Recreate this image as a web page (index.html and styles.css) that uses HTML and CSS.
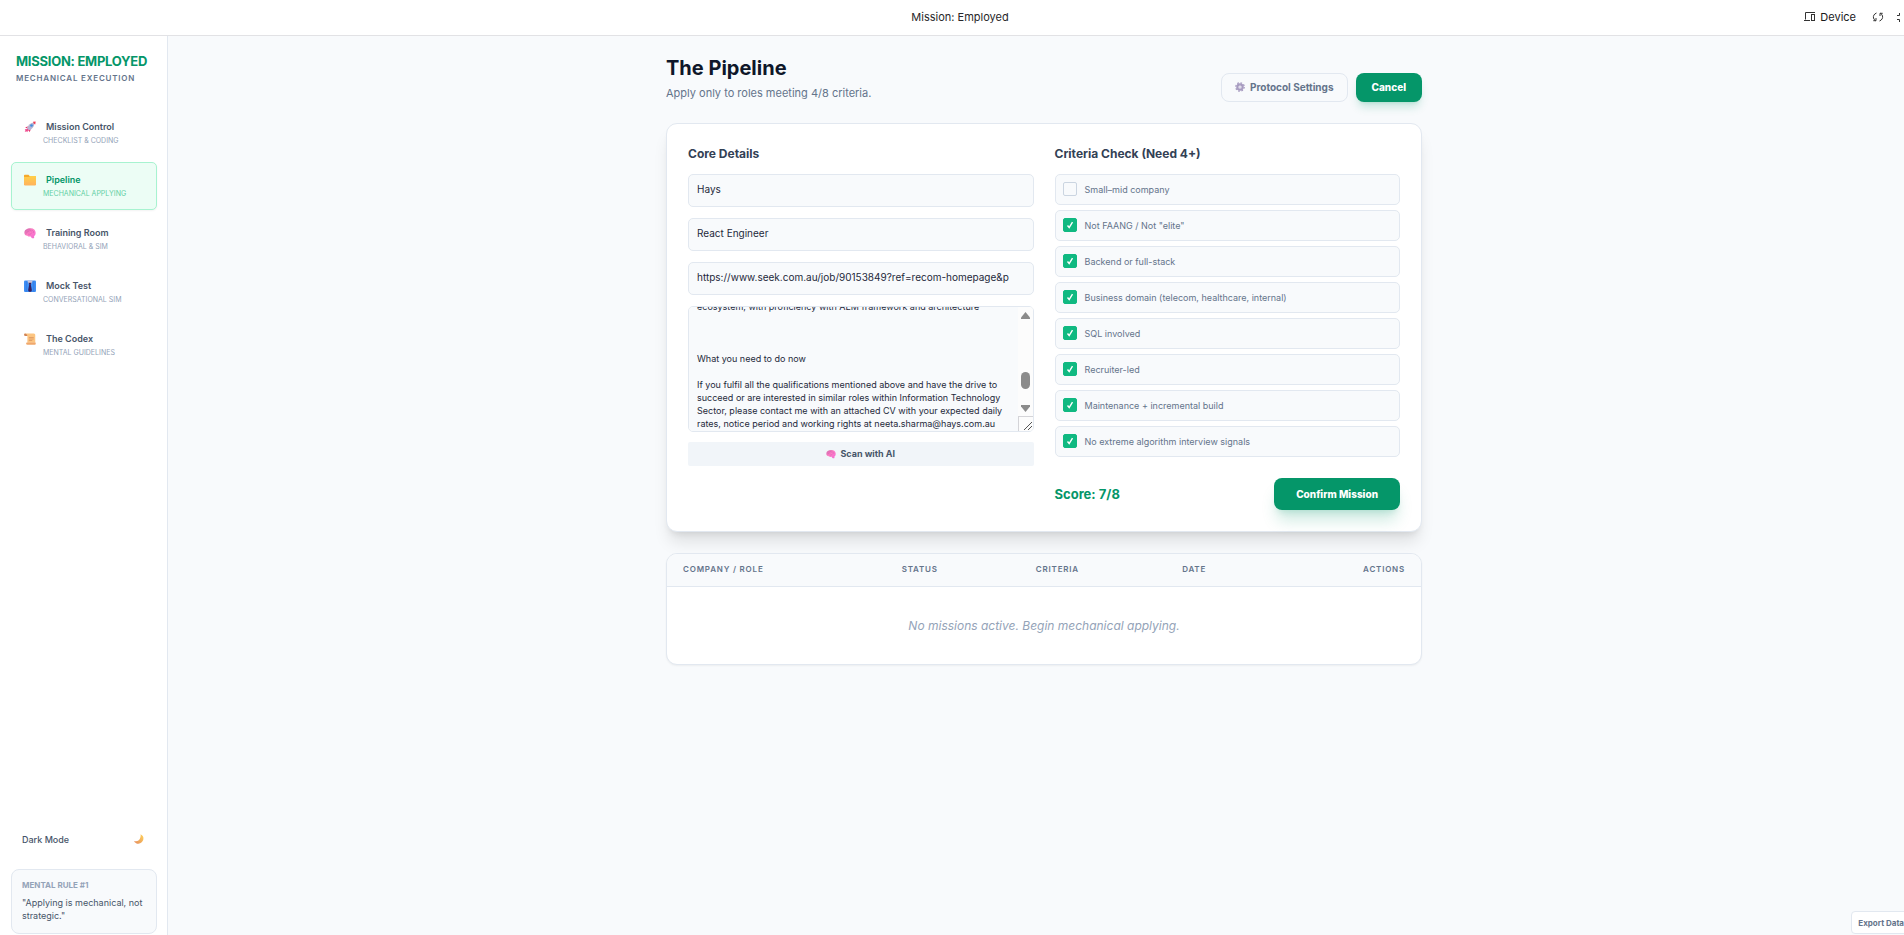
FILE: index.html
```
<!DOCTYPE html>
<html lang="en">
<head>
  <meta charset="UTF-8" />
  <meta name="viewport" content="width=device-width, initial-scale=1" />
  <title>Mission: Employed</title>
  <link rel="stylesheet" href="styles.css">
</head>
<body>
  <svg class="defs" aria-hidden="true">
    <defs>
      <linearGradient id="gPink" x1="0" y1="0" x2="1" y2="1"><stop offset="0" stop-color="#c766a8"/><stop offset=".45" stop-color="#ff7fc4"/><stop offset="1" stop-color="#f26bd6"/></linearGradient>
      <linearGradient id="gFolder" x1="0" y1="0" x2="0" y2="1"><stop offset="0" stop-color="#ffd047"/><stop offset="1" stop-color="#ffb35c"/></linearGradient>
      <linearGradient id="gMoon" x1="0" y1="1" x2="1" y2="0"><stop offset="0" stop-color="#e58a5e"/><stop offset="1" stop-color="#ffd45a"/></linearGradient>
      <symbol id="brain" viewBox="0 0 32 32">
        <path d="M1 15C1 7 8 3 17 3c9 0 14 5 14 12 0 4-1 7-4 9l0 5c-3 2-7 1-9-4-4 1-7 0-9-2-5 0-8-3-8-8z" fill="url(#gPink)"/>
        <path d="M7 16c1-4 4-5 7-3M13 8c4-1 6 1 6 4M21 9c4 0 5 3 4 6M12 19c4 1 7 0 8-3" fill="none" stroke="#d35db4" stroke-width="1.500" stroke-linecap="round"/>
      </symbol>
    </defs>
  </svg>

  <div class="app">
    <header class="topbar">
      <div></div>
      <div class="topbar-title">Mission: Employed</div>
      <div class="topbar-actions">
        <button class="device-btn">
          <svg width="12" height="12" viewBox="0 0 12 12" fill="none" stroke="#333"><path d="M11 1.500H1.500V8.500M0 9.500H6"/><rect x="7.500" y="3.500" width="3" height="6"/></svg>
          Device
        </button>
        <button class="icon-btn" aria-label="Refresh">
          <svg width="12" height="12" viewBox="0 0 12 12" fill="none" stroke="#333"><path d="M4.500 2C2 3 1 5 1.500 7c.3 1.200 1 2 2 2.700M1.300 9.700H4V7M7.500 10c2.500-1 3.500-3 3-5-.3-1.200-1-2-2-2.700M10.700 2.300H8V5"/></svg>
        </button>
        <button class="icon-btn" aria-label="Full screen">
          <svg width="12" height="12" viewBox="0 0 12 12" fill="none" stroke="#333"><path d="M1 4.500H3.500V2M11 4.500H8.500V2M1 8.500H3.500V11M11 8.500H8.500V11"/></svg>
        </button>
      </div>
    </header>

    <div class="layout">
      <aside class="sidebar">
        <div class="brand">
          <h1>MISSION: EMPLOYED</h1>
          <p>MECHANICAL EXECUTION</p>
        </div>
        <nav class="nav">
          <button class="nav-item">
            <svg class="nav-icon" viewBox="0 0 32 32"><path d="M10 14L3 18l6 1zM18 22l-3 8-3-7z" fill="#e8265c"/><path d="M8 19C11 11 18 5 26 4l2 3c-1 8-7 15-15 18z" fill="#b7b4d2"/><path d="M24 2l7-1-1 8c-3-1-5-3-6-7z" fill="#f2384f"/><circle cx="20" cy="12" r="3.500" fill="#3f8fe0"/><path d="M8 19l6 6-4 1-1 4-3-3-4 2 2-5-2-3 5 1z" fill="#f0468c"/></svg>
            <span class="nav-label">Mission Control</span>
            <span class="nav-sub">CHECKLIST &amp; CODING</span>
          </button>
          <button class="nav-item active">
            <svg class="nav-icon" viewBox="0 0 32 32"><path d="M0 4c0-1 1-2 2-2h10l3 3h15c1 0 2 1 2 2v20c0 2-1 3-2 3H2c-1 0-2-1-2-2z" fill="#f5a92b"/><path d="M0 8h13l3-3h16v22c0 2-1 3-2 3H2c-1 0-2-1-2-2z" fill="url(#gFolder)"/></svg>
            <span class="nav-label">Pipeline</span>
            <span class="nav-sub">MECHANICAL APPLYING</span>
          </button>
          <button class="nav-item">
            <svg class="nav-icon"><use href="#brain"/></svg>
            <span class="nav-label">Training Room</span>
            <span class="nav-sub">BEHAVIORAL &amp; SIM</span>
          </button>
          <button class="nav-item">
            <svg class="nav-icon" viewBox="0 0 32 32"><rect y="1" width="32" height="31" rx="3" fill="#3e8ff5"/><path d="M6 3v28M26 3v28" stroke="#2b6fd6" stroke-width="1.500"/><path d="M9 1h14l-3 9H12z" fill="#c9c6dc"/><path d="M12 7h8l-2 5 3 15-2 4h-6l-2-4 3-15z" fill="#36205f"/></svg>
            <span class="nav-label">Mock Test</span>
            <span class="nav-sub">CONVERSATIONAL SIM</span>
          </button>
          <button class="nav-item">
            <svg class="nav-icon" viewBox="0 0 32 32"><path d="M3 1h23c3 0 4 2 4 5v20H9V8H4C0 8 0 1 3 1z" fill="#fcc581"/><path d="M2 1c4 0 6 3 7 7H4C0 8-1 2 2 1z" fill="#cf8358"/><path d="M7 25h23c2 0 2 6-1 6H9c-4 0-4-5-2-6z" fill="#f0a86c"/><path d="M13 12h13M13 16h13M13 20h9" stroke="#d78d5b" stroke-width="1.800"/></svg>
            <span class="nav-label">The Codex</span>
            <span class="nav-sub">MENTAL GUIDELINES</span>
          </button>
        </nav>
        <div class="sidebar-footer">
          <button class="theme-toggle">
            <span>Dark Mode</span>
            <svg width="10" height="10" viewBox="0 0 32 32"><path d="M21 1c7 4 10 9 9 15-1 8-8 15-16 15C8 31 3 28 0 22c8 3 14 1 18-5 3-5 4-10 3-16z" fill="url(#gMoon)"/></svg>
          </button>
          <div class="rule-card">
            <h2>MENTAL RULE #1</h2>
            <p>"Applying is mechanical, not strategic."</p>
          </div>
        </div>
      </aside>

      <main class="main">
        <div class="content">
          <div class="page-header">
            <div>
              <h2 class="page-title">The Pipeline</h2>
              <p class="page-desc">Apply only to roles meeting 4/8 criteria.</p>
            </div>
            <div class="header-actions">
              <button class="btn-outline">
                <svg width="10" height="10" viewBox="0 0 32 32" fill="none"><circle cx="16" cy="16" r="13.500" stroke="#a79bc0" stroke-width="4" stroke-dasharray="5.300 5.300"/><circle cx="16" cy="16" r="8.500" stroke="#a79bc0" stroke-width="7"/><path d="M16 16V8M16 16l7 4M16 16l-7 4" stroke="#c4bbd6" stroke-width="2"/></svg>
                Protocol Settings
              </button>
              <button class="btn-primary">Cancel</button>
            </div>
          </div>

          <form class="card">
            <section class="details">
              <h3>Core Details</h3>
              <input type="text" value="Hays" aria-label="Company">
              <input type="text" value="React Engineer" aria-label="Role">
              <input type="text" value="https://www.seek.com.au/job/90153849?ref=recom-homepage&amp;p" aria-label="Job link">
              <div class="description">
                <textarea id="jobDescription" aria-label="Job description" spellcheck="false">
React Engineer

Your new company

A large organisation with an established technology team.

Your new role

Build and maintain customer facing web applications.
Work with designers, testers and product owners.
Support existing services and deliver improvements.
Take part in planning and code reviews.

What you'll need to succeed

Strong React and JavaScript skills
Experience with TypeScript
Experience with REST services
Knowledge of SQL and data modelling
Experience with automated testing
Good communication skills

What you'll get in return

Daily rate contract
Flexible working

Experience with the Adobe
ecosystem, with proficiency with AEM framework and architecture



What you need to do now

If you fulfil all the qualifications mentioned above and have the drive to succeed or are interested in similar roles within Information Technology Sector, please contact me with an attached CV with your expected daily rates, notice period and working rights at neeta.sharma@hays.com.au

If this job isn't quite right for you,
please contact us for a discussion
on your career.

Hays</textarea>
                <div class="scrollbar" aria-hidden="true">
                  <svg width="9" height="7" viewBox="0 0 9 7"><path d="M4.500 0L9 5.500V7H0V5.500z" fill="#8b8b8b"/></svg>
                  <div class="scroll-track"><div class="scroll-thumb"></div></div>
                  <svg width="9" height="7" viewBox="0 0 9 7"><path d="M4.500 7L9 1.500V0H0V1.500z" fill="#8b8b8b"/></svg>
                  <div class="resizer"><svg width="8" height="8" viewBox="0 0 8 8"><path d="M0 8L8 0M4 8L8 4" stroke="#555" fill="none"/></svg></div>
                </div>
              </div>
              <button type="button" class="scan-btn">
                <svg width="10" height="10"><use href="#brain"/></svg>
                Scan with AI
              </button>
            </section>

            <section class="criteria">
              <h3>Criteria Check (Need 4+)</h3>
              <div class="criteria-list">
                <label><input type="checkbox">Small–mid company</label>
                <label><input type="checkbox" checked>Not FAANG / Not "elite"</label>
                <label><input type="checkbox" checked>Backend or full-stack</label>
                <label><input type="checkbox" checked>Business domain (telecom, healthcare, internal)</label>
                <label><input type="checkbox" checked>SQL involved</label>
                <label><input type="checkbox" checked>Recruiter-led</label>
                <label><input type="checkbox" checked>Maintenance + incremental build</label>
                <label><input type="checkbox" checked>No extreme algorithm interview signals</label>
              </div>
              <div class="score-row">
                <span class="score">Score: 7/8</span>
                <button type="button" class="btn-primary confirm">Confirm Mission</button>
              </div>
            </section>
          </form>

          <div class="table-card">
            <table>
              <thead>
                <tr>
                  <th class="col-company">COMPANY / ROLE</th>
                  <th class="col-status">STATUS</th>
                  <th class="col-criteria">CRITERIA</th>
                  <th class="col-date">DATE</th>
                  <th class="col-actions">ACTIONS</th>
                </tr>
              </thead>
              <tbody>
                <tr><td colspan="5">No missions active. Begin mechanical applying.</td></tr>
              </tbody>
            </table>
          </div>
        </div>
      </main>
    </div>

    <button class="export-btn">Export Data</button>
  </div>

  <script>
    // open the description near its end
    document.getElementById("jobDescription").scrollTop = 379;
  </script>
</body>
</html>
```
FILE: styles.css
```
* { box-sizing: border-box; }
html { overflow: hidden; }
body {
  margin: 0;
  height: 100vh;
  overflow: hidden;
  font-family: Inter, "Liberation Sans", sans-serif;
  font-size: 10px;
  color: #1e293b;
  background: #f8fafc;
}
h1, h2, h3, p { margin: 0; }
button, input, textarea { font-family: inherit; }
button { cursor: pointer; }
svg { flex: none; }
.defs {
  position: absolute;
  width: 0;
  height: 0;
}

/* the shell runs a scrollbar's width past the window */
.app {
  position: relative;
  display: flex;
  flex-direction: column;
  width: calc(100% + 16px);
  height: 100%;
}

.topbar {
  display: grid;
  grid-template-columns: 1fr auto 1fr;
  align-items: center;
  height: 36px;
  flex: none;
  padding-bottom: 1px;
  background: #fff;
  border-bottom: 1px solid #e2e2e5;
}
.topbar-title {
  font-size: 11px;
  color: #27272a;
}
.topbar-actions {
  display: flex;
  justify-content: flex-end;
  align-items: center;
  gap: 12px;
  padding-right: 12px;
}
.topbar-actions button {
  display: flex;
  align-items: center;
  padding: 0;
  border: none;
  background: none;
  color: #18181b;
}
.topbar-actions .device-btn {
  gap: 4px;
  margin-right: 4px;
  font-size: 11px;
}

.layout {
  display: flex;
  flex: 1;
  min-height: 0;
}

/* sidebar */
.sidebar {
  display: flex;
  flex-direction: column;
  width: 168px;
  flex: none;
  background: #fff;
  border-right: 1px solid #e2e8f0;
}
.brand { padding: 16px 16px 0; }
.brand h1 {
  font-size: 13px;
  line-height: 19px;
  letter-spacing: -0.02em;
  color: #059669;
}
.brand p {
  margin-top: 2px;
  font-size: 8px;
  line-height: 11px;
  font-weight: 600;
  letter-spacing: 0.1em;
  color: #64748b;
}
.nav {
  display: flex;
  flex-direction: column;
  gap: 5px;
  padding: 25px 10px 0 11px;
}
.nav-item {
  display: grid;
  grid-template-columns: 12px 1fr;
  column-gap: 10px;
  align-content: center;
  align-items: center;
  height: 48px;
  padding: 2px 12px 0;
  border: 1px solid transparent;
  border-radius: 5px;
  background: none;
  text-align: left;
  color: #475569;
}
.nav-icon {
  width: 12px;
  height: 12px;
}
.nav-label {
  font-size: 9px;
  line-height: 14px;
  font-weight: 600;
}
.nav-sub {
  grid-column: 1 / -1;
  padding-left: 19px;
  font-size: 7px;
  line-height: 14px;
  color: #94a3b8;
}
.nav-item.active {
  background: #ecfdf5;
  border-color: #a7f3d0;
  box-shadow: 0 1px 2px rgba(0,0,0,0.05);
  color: #059669;
}
.active .nav-sub { color: #5fcfa4; }
.sidebar-footer {
  margin-top: auto;
  padding: 0 10px 1px 11px;
}
.theme-toggle {
  display: flex;
  justify-content: space-between;
  align-items: center;
  width: 100%;
  height: 30px;
  margin-bottom: 15px;
  padding: 0 13px 0 11px;
  border: none;
  background: none;
  font-size: 9px;
  font-weight: 500;
  color: #475569;
}
.rule-card {
  padding: 10px 10px 11px;
  border: 1px solid #e2e8f0;
  border-radius: 8px;
  background: #f8fafc;
}
.rule-card h2 {
  margin-bottom: 5px;
  font-size: 8px;
  line-height: 11px;
  color: #94a3b8;
}
.rule-card p {
  font-size: 9px;
  line-height: 13px;
  color: #475569;
}

/* main */
.main {
  flex: 1;
  min-width: 0;
  padding: 20px 21px;
}
.content {
  max-width: 756px;
  margin: 0 auto;
}
.page-header {
  display: flex;
  justify-content: space-between;
  align-items: flex-end;
  margin-bottom: 21px;
}
.page-title {
  font-size: 20px;
  line-height: 24px;
  color: #0f172a;
}
.page-desc {
  margin: 5px 0 1px;
  font-size: 11px;
  line-height: 16px;
  color: #64748b;
}
.header-actions {
  display: flex;
  gap: 8px;
}
.header-actions button { height: 29px; }
.btn-outline {
  display: flex;
  align-items: center;
  gap: 5px;
  padding: 0 13px 1px;
  border: 1px solid #e2e8f0;
  border-radius: 8px;
  background: #f8fafc;
  font-size: 10px;
  font-weight: 700;
  color: #64748b;
}
.btn-primary {
  padding: 0 16px 1px;
  border: none;
  border-radius: 8px;
  background: #059669;
  box-shadow: 0 7px 10px -2px rgba(5,150,105,0.2), 0 3px 4px -3px rgba(5,150,105,0.2);
  font-size: 10px;
  font-weight: 800;
  color: #fff;
}

.card {
  display: grid;
  grid-template-columns: 1fr 1fr;
  gap: 21px;
  padding: 21px;
  border: 1px solid #e2e8f0;
  border-radius: 11px;
  background: #fff;
  box-shadow: 0 13px 16px -3px rgba(0,0,0,0.1), 0 5px 7px -4px rgba(0,0,0,0.1);
}
.card h3 {
  margin-bottom: 11px;
  font-size: 12px;
  line-height: 18px;
  color: #334155;
}
.details {
  display: flex;
  flex-direction: column;
}
.details input,
.details textarea {
  display: block;
  width: 100%;
  margin: 0;
  border: 1px solid #e2e8f0;
  border-radius: 5px;
  background: #f8fafc;
  color: #1e293b;
}
.details input {
  height: 33px;
  margin-bottom: 11px;
  padding: 0 8px 3px;
  font-size: 10px;
}
.description {
  position: relative;
  margin-bottom: 10px;
}
.details textarea {
  height: 126px;
  padding: 8px 24px 8px 8px;
  font-size: 9px;
  line-height: 13px;
  resize: none;
}
.scrollbar {
  position: absolute;
  top: 1px;
  right: 1px;
  bottom: 1px;
  display: flex;
  flex-direction: column;
  align-items: center;
  width: 15px;
  padding-top: 5px;
  background: #fcfcfc;
  border-radius: 0 4px 4px 0;
}
.scroll-track {
  display: flex;
  flex-direction: column;
  justify-content: flex-end;
  flex: 1;
  padding-bottom: 16px;
}
.scroll-thumb {
  width: 9px;
  height: 17px;
  border-radius: 5px;
  background: #8b8b8b;
}
.resizer {
  display: flex;
  justify-content: flex-end;
  align-items: flex-end;
  width: 15px;
  height: 15px;
  margin-top: 4px;
  padding: 1px;
  border: solid #d4d4d8;
  border-width: 1px 0 0 1px;
}
.scan-btn {
  display: flex;
  justify-content: center;
  align-items: center;
  gap: 4px;
  height: 24px;
  padding-bottom: 2px;
  border: none;
  border-radius: 2px;
  background: #f1f5f9;
  font-size: 9px;
  font-weight: 700;
  color: #475569;
}

.criteria-list {
  display: flex;
  flex-direction: column;
  gap: 5px;
}
.criteria-list label {
  display: flex;
  align-items: center;
  gap: 8px;
  height: 31px;
  padding: 0 7px 1px;
  border: 1px solid #e2e8f0;
  border-radius: 5px;
  background: #f8fafc;
  font-size: 9px;
  color: #64748b;
}
.criteria-list input {
  appearance: none;
  width: 14px;
  height: 14px;
  margin: 0;
  border: 1px solid #cbd5e1;
  border-radius: 2px;
  background: #f8fafc;
}
.criteria-list input:checked {
  border-color: #10b981;
  background: #10b981 center / 12px 12px no-repeat url("data:image/svg+xml,%3Csvg xmlns='http://www.w3.org/2000/svg' viewBox='0 0 12 12'%3E%3Cpath d='M3.500 6.500L5.200 8.500L8.500 3.200' fill='none' stroke='white' stroke-width='1.400'/%3E%3C/svg%3E");
}
.score-row {
  display: flex;
  justify-content: space-between;
  align-items: center;
  margin-top: 21px;
}
.score {
  font-size: 13px;
  font-weight: 700;
  color: #059669;
}
.confirm {
  height: 32px;
  padding: 0 22px 1px;
  box-shadow: 0 13px 16px -3px rgba(5,150,105,0.2), 0 5px 7px -4px rgba(5,150,105,0.2);
}

.table-card {
  margin-top: 21px;
  border: 1px solid #e2e8f0;
  border-radius: 11px;
  overflow: hidden;
  background: #fff;
  box-shadow: 0 1px 2px rgba(0,0,0,0.05);
}
table {
  width: 100%;
  table-layout: fixed;
  border-collapse: collapse;
}
th {
  height: 32px;
  padding: 0 16px 1px;
  border-bottom: 1px solid #e2e8f0;
  background: #f8fafc;
  font-size: 8px;
  font-weight: 600;
  letter-spacing: 0.1em;
  text-align: left;
  color: #64748b;
}
.col-company { width: 29%; }
.col-status { width: 17.8%; }
.col-criteria { width: 19.4%; }
.col-date { width: 17%; }
.col-actions { text-align: right; }
td {
  height: 78px;
  text-align: center;
  font-size: 12px;
  font-style: italic;
  color: #94a3b8;
}

.export-btn {
  position: absolute;
  right: 9px;
  bottom: 1px;
  height: 23px;
  padding: 0 6px;
  border: 1px solid #e2e8f0;
  border-radius: 4px;
  background: #fff;
  font-size: 8px;
  font-weight: 700;
  color: #64748b;
}
```
